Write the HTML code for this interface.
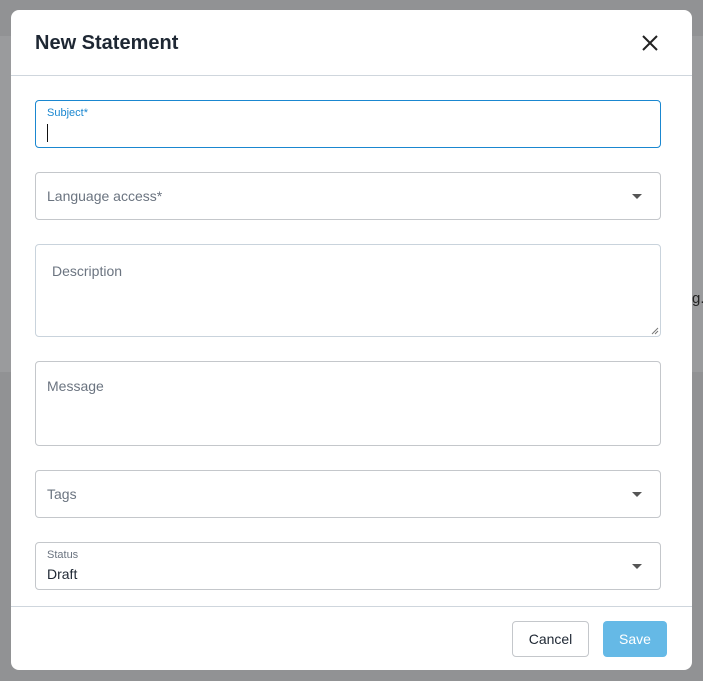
<!DOCTYPE html>
<html><head><style>
body{margin:0;width:703px;height:681px;background:#919294;position:relative;overflow:hidden;font-family:"Liberation Sans",sans-serif}
.band{position:absolute;left:0;top:36px;width:703px;height:336px;background:#9a9b9d}
.g{position:absolute;left:692px;top:290px;font-size:15px;color:#222}
.modal{position:absolute;left:11px;top:10px;width:681px;height:660px;background:#fff;border-radius:8px;overflow:hidden}
h1{position:absolute;left:24px;top:22px;margin:0;font-size:20px;font-weight:bold;color:#1e2733}
.x{position:absolute;left:630px;top:24px}
.hr{position:absolute;left:0;width:681px;height:1px;background:#cfd6dd}
.f{position:absolute;left:24px;width:626px;border:1px solid #c4c7cb;border-radius:4px;box-sizing:border-box}
.ph{position:absolute;left:11px;font-size:14px;color:#6b7480}
.lab{position:absolute;left:11px;top:11px;font-size:11px;color:#6b7480}
.arr{position:absolute;right:18px;top:21px;width:0;height:0;border-left:5px solid transparent;border-right:5px solid transparent;border-top:5px solid #555}
.btn{position:absolute;top:611px;height:36px;border-radius:4px;box-sizing:border-box;font-size:14px;text-align:center;line-height:34px}
</style></head><body>
<div class="band"></div><div class="g">g.</div>
<div class="modal">
<h1>New Statement</h1>
<svg class="x" width="18" height="18" viewBox="0 0 18 18"><path d="M2 2L16 16M16 2L2 16" stroke="#222" stroke-width="2"/></svg>
<div class="hr" style="top:65px"></div>
<div class="f" style="top:90px;height:48px;border-color:#1a87d0"><div class="lab" style="color:#1a87d0;top:6px">Subject*</div><div style="position:absolute;left:11px;top:23px;width:1px;height:18px;background:#111"></div></div>
<div class="f" style="top:162px;height:48px"><div class="ph" style="top:15px">Language access*</div><div class="arr"></div></div>
<div class="f" style="top:234px;height:93px;border-color:#c9d3dc"><div class="ph" style="top:18px;left:16px">Description</div>
<svg style="position:absolute;right:1px;bottom:1px" width="8" height="8"><path d="M7 1L1 7M7 4L4 7" stroke="#777" stroke-width="1"/></svg></div>
<div class="f" style="top:351px;height:85px"><div class="ph" style="top:16px">Message</div></div>
<div class="f" style="top:460px;height:48px"><div class="ph" style="top:15px">Tags</div><div class="arr"></div></div>
<div class="f" style="top:532px;height:48px"><div class="lab" style="top:6px">Status</div><div style="position:absolute;left:11px;top:23px;font-size:14px;color:#1e2733">Draft</div><div class="arr"></div></div>
<div class="hr" style="top:596px"></div>
<div class="btn" style="left:501px;width:77px;border:1px solid #c4c7cb;color:#1e2733">Cancel</div>
<div class="btn" style="left:592px;width:64px;background:#65b9e6;color:#fff;line-height:36px">Save</div>
</div>
</body></html>
